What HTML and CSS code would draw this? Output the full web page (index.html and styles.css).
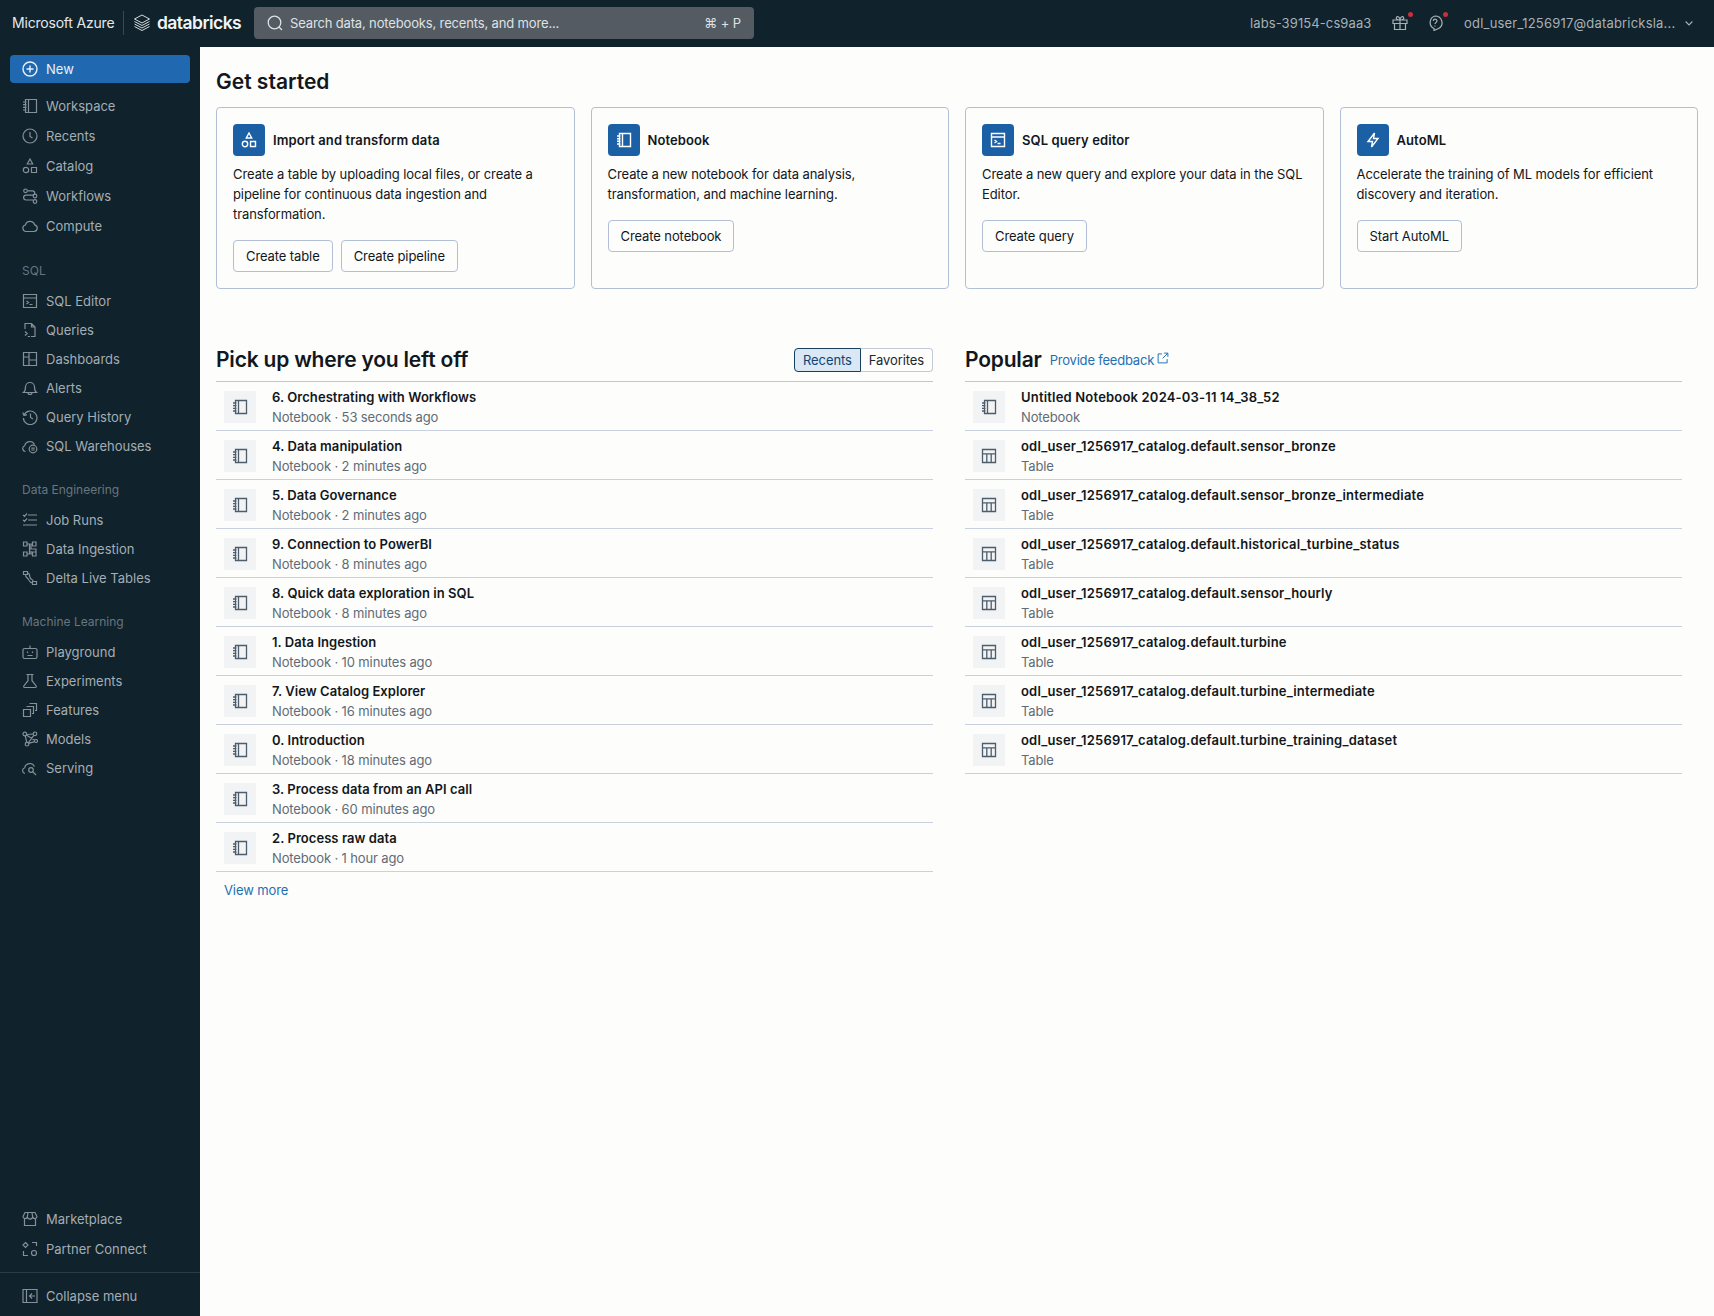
FILE: index.html
```html
<!DOCTYPE html>
<html lang="en">
<head>
<meta charset="utf-8">
<title>Databricks</title>
<link rel="stylesheet" href="styles.css">
</head>
<body>
<svg class="defs" width="0" height="0" aria-hidden="true">
  <symbol id="i-notebook" viewBox="0 0 16 16"><path d="M3.500 1.500h11v13h-11zM6.500 1.500v13M1 4h3.500M1 6.700h3.500M1 9.300h3.500M1 12h3.500"/></symbol>
  <symbol id="i-clock" viewBox="0 0 16 16"><circle cx="8" cy="8" r="7"/><path d="M8 4v4.500l2.500 1.500"/></symbol>
  <symbol id="i-catalog" viewBox="0 0 16 16"><path d="M8 1l2.700 5H5.300zM9.500 9.500h5v5h-5z"/><circle cx="4" cy="12" r="2.700"/></symbol>
  <symbol id="i-workflows" viewBox="0 0 16 16"><circle cx="3.500" cy="2.800" r="1.800"/><circle cx="13" cy="8" r="1.800"/><circle cx="13" cy="13.500" r="1.800"/><path d="M5.500 2.800h5a2.200 2.200 0 0 1 0 4.400H4a2.400 2.400 0 0 0 0 4.800h7"/></symbol>
  <symbol id="i-cloud" viewBox="0 0 16 16"><path d="M4 13.500a3.300 3.300 0 0 1-.6-6.500 4.800 4.800 0 0 1 9.200-.2 3.400 3.400 0 0 1-.6 6.700z"/></symbol>
  <symbol id="i-sql" viewBox="0 0 16 16"><path d="M1.500 1.500h13v13h-13zM1.500 5h13M4.500 8l2 1.500-2 1.500M7.500 11.500h3"/></symbol>
  <symbol id="i-queries" viewBox="0 0 16 16"><path d="M3 7V1.500h6.500l3.500 3.500v9.500H9M9.500 1.500V5H13M3 9.500l2.200 2-2.200 2M5.800 14.500H8"/></symbol>
  <symbol id="i-dash" viewBox="0 0 16 16"><path d="M1.500 1.500h13v13h-13zM7 1.500v13M7 9h7.500M1.500 6H7"/></symbol>
  <symbol id="i-bell" viewBox="0 0 16 16"><path d="M1.500 12.500c1.500-1 2-2.500 2-5.500a4.500 4.500 0 0 1 9 0c0 3 .5 4.500 2 5.500zM6 12.500a2 2 0 0 0 4 0"/></symbol>
  <symbol id="i-history" viewBox="0 0 16 16"><path d="M2 6a6.800 6.800 0 1 1-.6 3M.8 3.500 2 6.500l3-.8M8.500 4.500v4l2.500 1.500"/></symbol>
  <symbol id="i-warehouse" viewBox="0 0 16 16"><path d="M3.500 13.500a3 3 0 0 1-.8-5.800 5.200 5.200 0 0 1 9.800-1.200"/><circle cx="11" cy="11" r="3.800"/><path d="M9.300 10.200h3.400M9.300 12h3.400"/></symbol>
  <symbol id="i-jobs" viewBox="0 0 16 16"><path d="M6 3h9M6 8h9M1 13h14M1 2.800l1.500 1.500L5 1.500M1 7.800l1.500 1.500L5 6.500"/></symbol>
  <symbol id="i-ingest" viewBox="0 0 16 16"><path d="M1.500 1h3.500v4H1.500zM1.500 11h3.500v4H1.500zM10.500 1H14v4h-3.500zM10.500 11H14v4h-3.500zM5 3h2.500v10H5M10.500 3H9v4.500M7.500 8H14v2.500M10.500 13H9v-3"/></symbol>
  <symbol id="i-dlt" viewBox="0 0 16 16"><path d="M1.500 1.500h4v3h-4zM10.500 11.500h4v3h-4zM5.500 3c3 0 1.500 4 3 5.500S11 9 11 11.500M3.500 4.500c0 3 1.500 3 3 5s1.500 3.500 4 3.500"/></symbol>
  <symbol id="i-robot" viewBox="0 0 16 16"><path d="M2.500 4.500h11a1.500 1.500 0 0 1 1.500 1.500v7a1.500 1.500 0 0 1-1.500 1.500h-11A1.500 1.500 0 0 1 1 13V6a1.500 1.500 0 0 1 1.500-1.500zM8 4.500V1.500M5.500 7.500v1.500M10.500 7.500v1.500M5.500 11.500h5"/></symbol>
  <symbol id="i-flask" viewBox="0 0 16 16"><path d="M4.500 1.500h7M6 1.500v6.200L1.800 13a1 1 0 0 0 .8 1.500h10.800a1 1 0 0 0 .8-1.500L10 7.700V1.500"/></symbol>
  <symbol id="i-features" viewBox="0 0 16 16"><path d="M1.500 7.500h7v7h-7zM4.500 4.500h7v1.500M7.500 1.500h7v7h-1.500M11.500 4.500v7H10"/></symbol>
  <symbol id="i-models" viewBox="0 0 16 16"><circle cx="2.800" cy="3" r="1.800"/><circle cx="13" cy="2.800" r="1.800"/><circle cx="5" cy="13.200" r="1.800"/><circle cx="14" cy="10" r="1.500"/><path d="M4.500 3.500 11.300 3M3.300 4.700 4.700 11.400M6.500 12.300 12.600 10.600M11.800 4.300 6.200 12M4.300 4 12.700 9.300"/></symbol>
  <symbol id="i-serving" viewBox="0 0 16 16"><path d="M3 13.500a3 3 0 0 1-.3-5.800 5.200 5.200 0 0 1 9.800-1.200"/><circle cx="9" cy="10" r="2.300"/><path d="M10.700 11.700 14 15"/></symbol>
  <symbol id="i-market" viewBox="0 0 16 16"><path d="M2.500 8v6.500h11V8M3 1.500h10l2 4a2.200 2.200 0 0 1-4.300.5 2.800 2.800 0 0 1-5.400 0A2.200 2.200 0 0 1 1 5.500zM6 1.500 5.300 6M10 1.500l.7 4.500"/></symbol>
  <symbol id="i-partner" viewBox="0 0 16 16"><path d="M3.500 1.500 6 4 3.500 6.500 1 4zM10 1.500h4.500V5M1.500 10v4.500H6"/><circle cx="12" cy="12" r="2.500"/></symbol>
  <symbol id="i-collapse" viewBox="0 0 16 16"><path d="M1 1.500h14v13H1zM4.500 1.500v13M13 8H7.500M10 5.500 7.500 8l2.500 2.500"/></symbol>
  <symbol id="i-plus" viewBox="0 0 16 16"><circle cx="8" cy="8" r="7"/><path d="M8 4.500v7M4.500 8h7"/></symbol>
  <symbol id="i-table" viewBox="0 0 16 16"><path d="M1.500 1.500h13v13h-13zM1.500 5.800h13M5.800 5.800v8.700M10.200 5.800v8.700"/></symbol>
  <symbol id="i-bolt" viewBox="0 0 16 16"><path d="M9.500 1 3 9.500h4.500L6.500 15 13 6.500H8.500z"/></symbol>
  <symbol id="i-search" viewBox="0 0 16 16"><circle cx="7.500" cy="7.500" r="6.300"/><path d="m12 12 3 3"/></symbol>
  <symbol id="i-gift" viewBox="0 0 16 16"><path d="M1 5h14v3.500H1zM2.500 8.500v6h11v-6M8 5v9.500M8 5C5 5 3.500 3.800 4.500 2.200S8 2.500 8 5c0-2.500 2.500-4.400 3.500-2.800S11 5 8 5z"/></symbol>
  <symbol id="i-help" viewBox="0 0 16 16"><path d="M8 1a7 6.700 0 0 1 3.500 12.500L7 15.500v-2A6.700 6.700 0 0 1 8 1zM6.300 6a1.800 1.800 0 1 1 2.700 1.500c-.7.400-1 .8-1 1.500M8 10.500v1"/></symbol>
  <symbol id="i-ext" viewBox="0 0 16 16"><path d="M6.500 2.500h-5v12h12v-5M9.500 1.500h5v5M14.500 1.500 7.500 8.500"/></symbol>
  <symbol id="i-chev" viewBox="0 0 16 16"><path d="m3.500 6 4.500 4.500L12.500 6"/></symbol>
</svg>

<header class="topbar">
  <span class="cloud">Microsoft Azure</span>
  <span class="topdiv"></span>
  <svg class="logo" viewBox="0 0 18 18"><path d="M9 1 16.500 5 9 9 1.500 5zM1.500 7.500 9 11.500l7.500-4M1.500 10 9 14l7.500-4M1.500 12.500 9 16.500l7.500-4"/></svg>
  <span class="wordmark">databricks</span>
  <div class="search">
    <svg class="ic ic-search"><use href="#i-search"/></svg>
    <span class="search-text">Search data, notebooks, recents, and more...</span>
    <span class="search-key">⌘ + P</span>
  </div>
  <div class="top-right">
    <span class="workspace">labs-39154-cs9aa3</span>
    <span class="top-icon"><svg class="ic"><use href="#i-gift"/></svg><i class="dot"></i></span>
    <span class="top-icon"><svg class="ic"><use href="#i-help"/></svg><i class="dot"></i></span>
    <span class="user">odl_user_1256917@databricksla...</span>
    <svg class="ic ic-chev"><use href="#i-chev"/></svg>
  </div>
</header>

<div class="shell">
  <nav class="side">
    <a class="new"><svg class="ic"><use href="#i-plus"/></svg>New</a>
    <div class="group first">
      <a class="item tall"><svg class="ic"><use href="#i-notebook"/></svg>Workspace</a>
      <a class="item tall"><svg class="ic"><use href="#i-clock"/></svg>Recents</a>
      <a class="item tall"><svg class="ic"><use href="#i-catalog"/></svg>Catalog</a>
      <a class="item tall"><svg class="ic"><use href="#i-workflows"/></svg>Workflows</a>
      <a class="item tall"><svg class="ic"><use href="#i-cloud"/></svg>Compute</a>
    </div>
    <div class="group">
      <div class="label">SQL</div>
      <a class="item"><svg class="ic"><use href="#i-sql"/></svg>SQL Editor</a>
      <a class="item"><svg class="ic"><use href="#i-queries"/></svg>Queries</a>
      <a class="item"><svg class="ic"><use href="#i-dash"/></svg>Dashboards</a>
      <a class="item"><svg class="ic"><use href="#i-bell"/></svg>Alerts</a>
      <a class="item"><svg class="ic"><use href="#i-history"/></svg>Query History</a>
      <a class="item"><svg class="ic"><use href="#i-warehouse"/></svg>SQL Warehouses</a>
    </div>
    <div class="group">
      <div class="label">Data Engineering</div>
      <a class="item"><svg class="ic"><use href="#i-jobs"/></svg>Job Runs</a>
      <a class="item"><svg class="ic"><use href="#i-ingest"/></svg>Data Ingestion</a>
      <a class="item"><svg class="ic"><use href="#i-dlt"/></svg>Delta Live Tables</a>
    </div>
    <div class="group">
      <div class="label">Machine Learning</div>
      <a class="item"><svg class="ic"><use href="#i-robot"/></svg>Playground</a>
      <a class="item"><svg class="ic"><use href="#i-flask"/></svg>Experiments</a>
      <a class="item"><svg class="ic"><use href="#i-features"/></svg>Features</a>
      <a class="item"><svg class="ic"><use href="#i-models"/></svg>Models</a>
      <a class="item"><svg class="ic"><use href="#i-serving"/></svg>Serving</a>
    </div>
    <div class="group bottom">
      <a class="item tall"><svg class="ic"><use href="#i-market"/></svg>Marketplace</a>
      <a class="item tall"><svg class="ic"><use href="#i-partner"/></svg>Partner Connect</a>
    </div>
    <div class="collapse">
      <a class="item tall"><svg class="ic"><use href="#i-collapse"/></svg>Collapse menu</a>
    </div>
  </nav>

  <main class="main">
    <h1 class="h-start">Get started</h1>
    <section class="cards">
      <article class="card">
        <div class="card-head"><span class="card-icon"><svg class="ic"><use href="#i-catalog"/></svg></span><h2>Import and transform data</h2></div>
        <p>Create a table by uploading local files, or create a pipeline for continuous data ingestion and transformation.</p>
        <div class="btns"><button>Create table</button><button>Create pipeline</button></div>
      </article>
      <article class="card">
        <div class="card-head"><span class="card-icon"><svg class="ic"><use href="#i-notebook"/></svg></span><h2>Notebook</h2></div>
        <p>Create a new notebook for data analysis, transformation, and machine learning.</p>
        <div class="btns"><button>Create notebook</button></div>
      </article>
      <article class="card">
        <div class="card-head"><span class="card-icon"><svg class="ic"><use href="#i-sql"/></svg></span><h2>SQL query editor</h2></div>
        <p>Create a new query and explore your data in the SQL Editor.</p>
        <div class="btns"><button>Create query</button></div>
      </article>
      <article class="card">
        <div class="card-head"><span class="card-icon"><svg class="ic"><use href="#i-bolt"/></svg></span><h2>AutoML</h2></div>
        <p>Accelerate the training of ML models for efficient discovery and iteration.</p>
        <div class="btns"><button>Start AutoML</button></div>
      </article>
    </section>

    <section class="lists">
      <div class="col">
        <div class="col-head">
          <h1>Pick up where you left off</h1>
          <div class="toggle"><span class="on">Recents</span><span>Favorites</span></div>
        </div>
        <ul class="rows">
          <li><span class="row-icon"><svg class="ic"><use href="#i-notebook"/></svg></span><div><b>6. Orchestrating with Workflows</b><small>Notebook · 53 seconds ago</small></div></li>
          <li><span class="row-icon"><svg class="ic"><use href="#i-notebook"/></svg></span><div><b>4. Data manipulation</b><small>Notebook · 2 minutes ago</small></div></li>
          <li><span class="row-icon"><svg class="ic"><use href="#i-notebook"/></svg></span><div><b>5. Data Governance</b><small>Notebook · 2 minutes ago</small></div></li>
          <li><span class="row-icon"><svg class="ic"><use href="#i-notebook"/></svg></span><div><b>9. Connection to PowerBI</b><small>Notebook · 8 minutes ago</small></div></li>
          <li><span class="row-icon"><svg class="ic"><use href="#i-notebook"/></svg></span><div><b>8. Quick data exploration in SQL</b><small>Notebook · 8 minutes ago</small></div></li>
          <li><span class="row-icon"><svg class="ic"><use href="#i-notebook"/></svg></span><div><b>1. Data Ingestion</b><small>Notebook · 10 minutes ago</small></div></li>
          <li><span class="row-icon"><svg class="ic"><use href="#i-notebook"/></svg></span><div><b>7. View Catalog Explorer</b><small>Notebook · 16 minutes ago</small></div></li>
          <li><span class="row-icon"><svg class="ic"><use href="#i-notebook"/></svg></span><div><b>0. Introduction</b><small>Notebook · 18 minutes ago</small></div></li>
          <li><span class="row-icon"><svg class="ic"><use href="#i-notebook"/></svg></span><div><b>3. Process data from an API call</b><small>Notebook · 60 minutes ago</small></div></li>
          <li><span class="row-icon"><svg class="ic"><use href="#i-notebook"/></svg></span><div><b>2. Process raw data</b><small>Notebook · 1 hour ago</small></div></li>
        </ul>
        <a class="more">View more</a>
      </div>
      <div class="col popular">
        <div class="col-head start">
          <h1>Popular</h1>
          <a class="feedback">Provide feedback<svg class="ic ic-ext"><use href="#i-ext"/></svg></a>
        </div>
        <ul class="rows">
          <li><span class="row-icon"><svg class="ic"><use href="#i-notebook"/></svg></span><div><b>Untitled Notebook 2024-03-11 14_38_52</b><small>Notebook</small></div></li>
          <li><span class="row-icon"><svg class="ic"><use href="#i-table"/></svg></span><div><b>odl_user_1256917_catalog.default.sensor_bronze</b><small>Table</small></div></li>
          <li><span class="row-icon"><svg class="ic"><use href="#i-table"/></svg></span><div><b>odl_user_1256917_catalog.default.sensor_bronze_intermediate</b><small>Table</small></div></li>
          <li><span class="row-icon"><svg class="ic"><use href="#i-table"/></svg></span><div><b>odl_user_1256917_catalog.default.historical_turbine_status</b><small>Table</small></div></li>
          <li><span class="row-icon"><svg class="ic"><use href="#i-table"/></svg></span><div><b>odl_user_1256917_catalog.default.sensor_hourly</b><small>Table</small></div></li>
          <li><span class="row-icon"><svg class="ic"><use href="#i-table"/></svg></span><div><b>odl_user_1256917_catalog.default.turbine</b><small>Table</small></div></li>
          <li><span class="row-icon"><svg class="ic"><use href="#i-table"/></svg></span><div><b>odl_user_1256917_catalog.default.turbine_intermediate</b><small>Table</small></div></li>
          <li><span class="row-icon"><svg class="ic"><use href="#i-table"/></svg></span><div><b>odl_user_1256917_catalog.default.turbine_training_dataset</b><small>Table</small></div></li>
        </ul>
      </div>
    </section>
  </main>
</div>
</body>
</html>
```

FILE: styles.css
```css
* { box-sizing: border-box; }
html, body { margin: 0; height: 100%; }
body {
  font-family: Inter, "Liberation Sans", sans-serif;
  font-size: 13px;
  line-height: 20px;
  color: #11171c;
  background: #fdfdfb;
  overflow: hidden;
}
.defs { position: absolute; }
.ic {
  width: 16px;
  height: 16px;
  flex: none;
  fill: none;
  stroke: currentColor;
  stroke-width: 1.2;
}

/* Top bar */
.topbar {
  height: 47px;
  background: #10222b;
  display: flex;
  align-items: center;
  padding: 0 0 1px 12px;
  color: #e4e8ea;
}
.cloud { font-size: 14px; letter-spacing: -0.2px; width: 102px; white-space: nowrap; }
.topdiv { width: 1px; height: 24px; background: #3a4850; margin: 0 9px; }
.logo {
  width: 18px;
  height: 18px;
  flex: none;
  fill: none;
  stroke: #d5dadc;
  stroke-width: 1;
}
.wordmark {
  font-size: 17.5px;
  font-weight: 600;
  letter-spacing: -0.55px;
  color: #f2f4f5;
  margin-left: 6px;
  width: 97px;
  white-space: nowrap;
}
.search {
  width: 500px;
  height: 32px;
  background: #555b63;
  border-radius: 4px;
  display: flex;
  align-items: center;
  padding: 0 13px;
  color: #dfe2e4;
}
.ic-search { margin-right: 7px; stroke-width: 1.3; }
.search-text { flex: 1; letter-spacing: -0.15px; }
.search-key { letter-spacing: -0.1px; }
.top-right {
  margin-left: auto;
  display: flex;
  align-items: center;
  color: #a7b1b7;
  padding-right: 19px;
}
.workspace { width: 122px; margin-right: 20px; letter-spacing: 0.1px; white-space: nowrap; }
.top-icon { position: relative; display: flex; margin-right: 19px; }
.top-icon + .top-icon { margin-right: 21px; }
.dot {
  position: absolute;
  top: -3px;
  right: -5px;
  width: 5px;
  height: 5px;
  border-radius: 50%;
  background: #c8303c;
}
.user { width: 209px; letter-spacing: 0.2px; white-space: nowrap; }
.ic-chev { width: 12px; height: 12px; margin-left: 10px; stroke-width: 1.5; }

/* Shell */
.shell { display: flex; height: 1269px; }

/* Sidebar */
.side {
  width: 200px;
  flex: none;
  background: #10222b;
  display: flex;
  flex-direction: column;
  padding-top: 8px;
  color: #a3aeb5;
}
.new {
  height: 28px;
  margin: 0 10px;
  padding-left: 12px;
  display: flex;
  align-items: center;
  gap: 8px;
  background: #2069b0;
  border-radius: 4px;
  color: #eaf1f7;
}
.new .ic { stroke-width: 1.4; }
.group.first { margin-top: 8px; }
.label {
  height: 20px;
  margin: 20px 0 5px 22px;
  font-size: 12px;
  color: #69767e;
}
.item {
  height: 29px;
  display: flex;
  align-items: center;
  gap: 8px;
  padding-left: 22px;
  white-space: nowrap;
}
.item.tall { height: 30px; }
.item .ic { color: #84909a; }
.group.bottom { margin-top: auto; }
.collapse {
  margin-top: 8px;
  padding-top: 8px;
  padding-bottom: 5px;
  border-top: 1px solid #2d3b44;
}

/* Main */
.main { flex: 1; min-width: 0; padding-left: 16px; }
h1 {
  margin: 0;
  font-size: 21px;
  line-height: 28px;
  font-weight: 600;
  letter-spacing: -0.2px;
  color: #11171c;
}
.h-start { margin-top: 21px; margin-bottom: 11px; letter-spacing: 0; }
.cards {
  display: grid;
  grid-template-columns: repeat(4, 1fr);
  gap: 16px;
  padding-right: 16px;
}
.card {
  height: 182px;
  padding: 16px;
  border: 1px solid #b3bfd6;
  border-radius: 4px;
}
.card-head { display: flex; align-items: center; gap: 8px; }
.card-icon {
  width: 32px;
  height: 32px;
  border-radius: 4px;
  background: #1b5fa5;
  color: #fff;
  display: flex;
  align-items: center;
  justify-content: center;
}
.card-icon .ic { stroke-width: 1.4; }
.card h2 { margin: 0; font-size: 13px; font-weight: 600; letter-spacing: 0.1px; }
.card p { margin: 8px 0 0; letter-spacing: -0.085px; }
.btns { display: flex; gap: 8px; margin-top: 16px; }
button {
  height: 32px;
  padding: 0 12px;
  font: inherit;
  letter-spacing: -0.1px;
  color: #11171c;
  background: #fdfdfc;
  border: 1px solid #b3bfd6;
  border-radius: 4px;
}

.lists {
  display: grid;
  grid-template-columns: 717px 717px;
  gap: 32px;
  margin-top: 57px;
}
.col-head {
  height: 36px;
  display: flex;
  align-items: center;
  justify-content: space-between;
  padding-bottom: 8px;
  border-bottom: 1px solid #bdc7da;
}
.col-head.start { justify-content: flex-start; gap: 8px; }
.toggle { display: flex; }
.toggle span {
  height: 24px;
  padding: 0 8px;
  display: flex;
  align-items: center;
  letter-spacing: -0.1px;
  border: 1px solid #c2cbd8;
  border-left: 0;
  border-radius: 0 4px 4px 0;
  color: #1b2830;
}
.toggle .on {
  border: 1px solid #17405f;
  border-radius: 4px 0 0 4px;
  background: #d9e8f4;
  color: #0f4476;
}
.feedback { display: flex; align-items: center; letter-spacing: -0.2px; color: #2270b4; }
.ic-ext { width: 12px; height: 12px; margin-left: 3px; stroke-width: 1.3; margin-top: -3px; }
.rows { list-style: none; margin: 0; padding: 0; }
.rows li {
  height: 49px;
  padding: 5px 0 0 8px;
  display: flex;
  gap: 16px;
  border-bottom: 1px solid #c9d1de;
}
.row-icon {
  width: 32px;
  height: 32px;
  margin-top: 4px;
  background: #f2f3f4;
  color: #4d5d6b;
  display: flex;
  align-items: center;
  justify-content: center;
}
.row-icon .ic { stroke-width: 1.3; }
.rows b { display: block; font-weight: 600; letter-spacing: 0.06px; color: #11171c; white-space: nowrap; }
.popular .rows b { letter-spacing: 0.19px; }
.rows small { display: block; font-size: 13px; letter-spacing: -0.13px; color: #5d6c78; white-space: nowrap; }
.more { display: block; margin: 8px 0 0 8px; letter-spacing: -0.1px; color: #2270b4; }
```
